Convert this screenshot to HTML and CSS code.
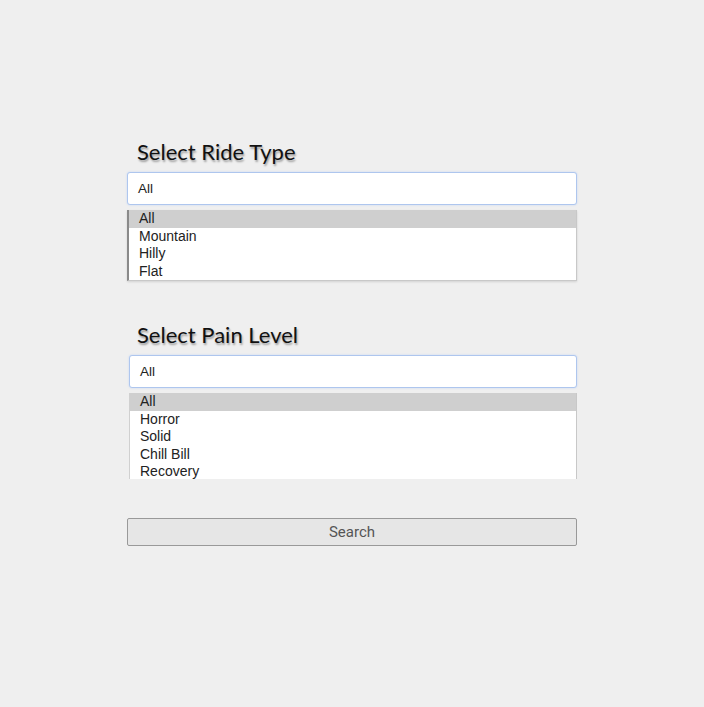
FILE: index.html
```html
<!DOCTYPE html>
<html lang="en">
<head>
  <meta charset="UTF-8">
  <meta name="viewport" content="width=device-width, initial-scale=1">
  <title>Ride Finder</title>
  <link rel="stylesheet" href="styles.css">
</head>
<body>
  <div class="container">

    <div class="field">
      <h3>Select Ride Type</h3>
      <div class="combo">All</div>
      <ul class="options">
        <li class="selected">All</li>
        <li>Mountain</li>
        <li>Hilly</li>
        <li>Flat</li>
      </ul>
    </div>

    <div class="field pain">
      <h3>Select Pain Level</h3>
      <div class="combo">All</div>
      <ul class="options cut">
        <li class="selected">All</li>
        <li>Horror</li>
        <li>Solid</li>
        <li>Chill Bill</li>
        <li>Recovery</li>
      </ul>
    </div>

    <button type="button" class="search">Search</button>
  </div>
</body>
</html>
```
FILE: styles.css
```css
body {
  margin: 0;
  background: #efefef;
  font-family: "Liberation Sans", Arial, sans-serif;
}

.container {
  width: 450px;
  margin: 0 auto;
  padding-top: 139px;
}

.field h3 {
  margin: 0 0 7px 10px;
  font-family: Lato, "Open Sans", sans-serif;
  font-size: 22px;
  font-weight: normal;
  color: #111;
  text-shadow: 1px 2px 2px rgba(0,0,0,0.35);
  line-height: 26px;
}

.combo {
  height: 31px;
  line-height: 31px;
  padding-left: 10px;
  background: #fff;
  border: 1px solid #aec6ee;
  border-radius: 3px;
  box-shadow: 0 0 2px #c0d4f5;
  font-size: 13.5px;
  color: #222;
}

.options {
  list-style: none;
  margin: 5px 0 0;
  padding: 0;
  background: #fff;
  border-left: 2px solid #8a8a8a;
  border-right: 1px solid #c8c8c8;
  border-bottom: 1px solid #c8c8c8;
  box-shadow: 0 1px 2px rgba(0,0,0,0.12);
}

.options li {
  height: 17.5px;
  line-height: 17px;
  padding-left: 10px;
  font-size: 14px;
  color: #222;
}

.options li.selected {
  background: #cfcfcf;
}

.pain {
  margin-top: 41px;
}

.pain .combo {
  margin-left: 2px;
}

.pain .options {
  margin-left: 2px;
  height: 86px;
  overflow: hidden;
  border-left: 1px solid #d0d0d0;
  border-bottom: none;
  box-shadow: none;
}

.search {
  display: block;
  width: 450px;
  height: 28px;
  margin-top: 39px;
  background: #e6e6e6;
  border: 1px solid #999;
  border-radius: 2px;
  font-family: Roboto, sans-serif;
  font-size: 15px;
  color: #555;
  padding: 0;
}
```
